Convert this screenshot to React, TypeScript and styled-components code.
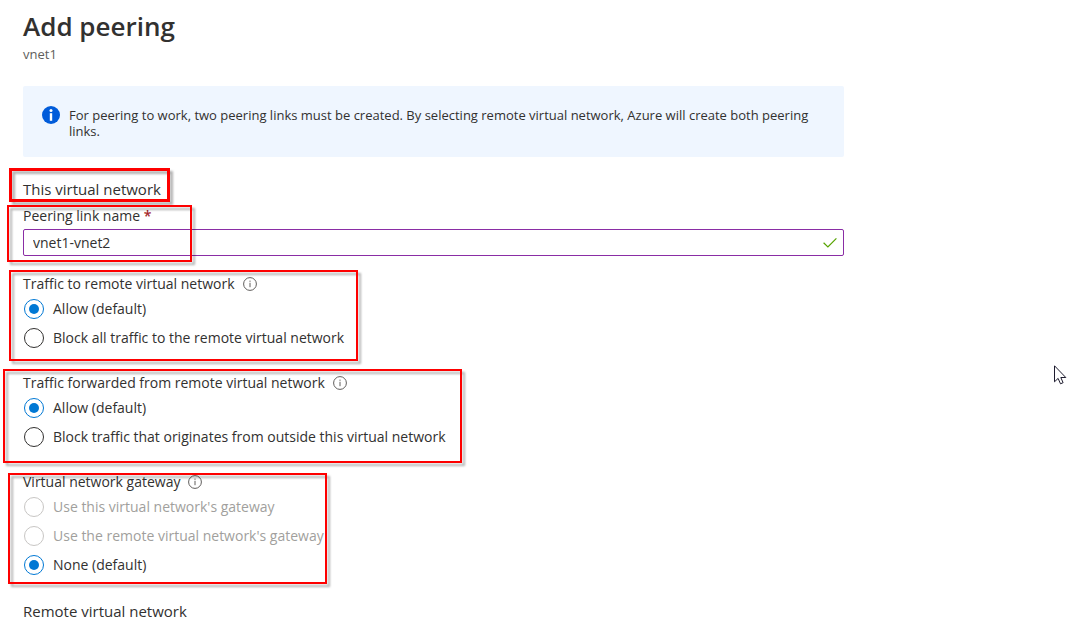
import { useState } from "react";
import styled, { createGlobalStyle } from "styled-components";

const GlobalStyle = createGlobalStyle`
  *, *::before, *::after { box-sizing: border-box; }
  body {
    margin: 0;
    background: #fff;
    color: #323130;
    font-family: "Segoe UI", "Open Sans", "Noto Sans", sans-serif;
    font-size: 14px;
    line-height: 20px;
  }
`;

const Page = styled.main`
  position: relative;
  min-height: 100vh;
  padding: 8px 23px;
  overflow: hidden;
`;

const Blade = styled.div`
  max-width: 821px;
`;

const Title = styled.h1`
  margin: 0;
  font-size: 26px;
  font-weight: 600;
  line-height: 36px;
`;

const Subtitle = styled.p`
  margin: 0;
  color: #605e5c;
  font-size: 13px;
`;

const Banner = styled.div`
  display: flex;
  gap: 9px;
  margin-top: 22px;
  padding: 20px 20px 16px 19px;
  min-height: 71px;
  border-radius: 2px;
  background: #eff6ff;
  font-size: 13px;
  line-height: 16px;

  svg { flex: none; }
  p { margin: 1px 0 0; }
`;

const Section = styled.section`
  position: relative;
  margin-top: 22px;
`;

const SectionTitle = styled.h2`
  margin: 0;
  font-size: 15px;
  font-weight: 400;
  line-height: 20px;
`;

const Field = styled.div`
  position: relative;
  margin-top: 7px;

  label { display: block; line-height: 20px; }
`;

const Required = styled.span`
  color: #a4262c;
  font-weight: 600;
`;

const InputBox = styled.div`
  display: flex;
  align-items: center;
  height: 27px;
  margin-top: 3px;
  padding-right: 6px;
  border: 1px solid #8a2da5;
  border-radius: 2px;
`;

const TextInput = styled.input`
  flex: 1;
  min-width: 0;
  padding: 0 9px;
  border: 0;
  outline: 0;
  background: transparent;
  color: inherit;
  font: inherit;
`;

const GroupFrame = styled.div`
  position: relative;
`;

const Group = styled.fieldset`
  min-width: 0;
  margin: 0;
  padding: 0;
  border: 0;
`;

const Groups = styled.div`
  display: flex;
  flex-direction: column;
  gap: 21px;
  margin-top: 18px;
`;

const Legend = styled.legend`
  display: flex;
  align-items: center;
  gap: 8px;
  height: 20px;
  padding: 0;
`;

const InfoButton = styled.button`
  display: flex;
  padding: 0;
  border: 0;
  background: none;
  color: #605e5c;
`;

const Option = styled.label`
  display: flex;
  align-items: center;
  gap: 9px;
  height: 29px;
  padding-left: 1px;

  &:has(input:disabled) { color: #a19f9d; }
`;

const Radio = styled.input`
  display: grid;
  place-content: center;
  width: 20px;
  height: 20px;
  margin: 0;
  border: 1px solid #323130;
  border-radius: 50%;
  background: #fff;
  appearance: none;

  &:checked { border-color: #0078d4; }
  &:checked::before {
    content: "";
    width: 10px;
    height: 10px;
    border-radius: 50%;
    background: #0078d4;
  }
  &:disabled { border-color: #c8c6c4; }
`;

interface MarkProps {
  $x: number;
  $y: number;
  $w: number;
  $h: number;
  $stroke?: number;
}

const Mark = styled.span<MarkProps>`
  position: absolute;
  left: ${(p) => p.$x}px;
  top: ${(p) => p.$y}px;
  width: ${(p) => p.$w}px;
  height: ${(p) => p.$h}px;
  border: ${(p) => p.$stroke ?? 2}px solid #fe0000;
  filter: drop-shadow(3px 3px 1px rgba(0, 0, 0, 0.3));
  pointer-events: none;
`;

const Pointer = styled.svg`
  position: absolute;
  left: 1054px;
  top: 365px;
`;

const InfoOutline = () => (
  <svg width="14" height="14" viewBox="0 0 14 14" fill="none" stroke="currentColor" aria-hidden="true">
    <circle cx="7" cy="7" r="6.4" />
    <path d="M7 5.8v4.4M7 3.6v1.2" />
  </svg>
);

interface Choice {
  label: string;
  disabled?: boolean;
}

interface RadioGroupProps {
  name: string;
  title: string;
  choices: Choice[];
  initial: number;
  mark: MarkProps;
}

const RadioGroup = ({ name, title, choices, initial, mark }: RadioGroupProps) => {
  const [selected, setSelected] = useState(initial);
  return (
    <GroupFrame>
      <Group>
        <Legend>
          {title}
          <InfoButton type="button" aria-label={`About ${title}`}>
            <InfoOutline />
          </InfoButton>
        </Legend>
        {choices.map((choice, i) => (
          <Option key={choice.label}>
            <Radio
              type="radio"
              name={name}
              checked={selected === i}
              disabled={choice.disabled}
              onChange={() => setSelected(i)}
            />
            {choice.label}
          </Option>
        ))}
      </Group>
      <Mark {...mark} />
    </GroupFrame>
  );
};

export default function App() {
  const [linkName, setLinkName] = useState("vnet1-vnet2");
  return (
    <Page>
      <GlobalStyle />
      <Blade>
        <Title>Add peering</Title>
        <Subtitle>vnet1</Subtitle>
        <Banner role="note">
          <svg width="18" height="18" viewBox="0 0 18 18" aria-hidden="true">
            <circle cx="9" cy="9" r="9" fill="#015cda" />
            <circle cx="9" cy="4.4" r="1.5" fill="#fff" />
            <path d="M7.8 7.2h2.4v7.6H7.8z" fill="#fff" />
          </svg>
          <p>
            For peering to work, two peering links must be created. By selecting remote virtual
            network, Azure will create both peering links.
          </p>
        </Banner>

        <Section>
          <SectionTitle>This virtual network</SectionTitle>
          <Mark $x={-14} $y={-11} $w={161} $h={34} $stroke={3} />
        </Section>
        <Field>
          <label htmlFor="link-name">
            Peering link name <Required>*</Required>
          </label>
          <InputBox>
            <TextInput id="link-name" value={linkName} onChange={(e) => setLinkName(e.target.value)} />
            <svg width="14" height="12" viewBox="0 0 14 12" fill="none" stroke="#57a300" strokeWidth="1.2" aria-hidden="true">
              <path d="M.6 5.8 4.9 10 13.4 1.4" />
            </svg>
          </InputBox>
          <Mark $x={-16} $y={-1} $w={185} $h={57} />
        </Field>

        <Groups>
          <RadioGroup
            name="to-remote"
            title="Traffic to remote virtual network"
            initial={0}
            choices={[
              { label: "Allow (default)" },
              { label: "Block all traffic to the remote virtual network" },
            ]}
            mark={{ $x: -14, $y: -4, $w: 349, $h: 91 }}
          />
          <RadioGroup
            name="forwarded"
            title="Traffic forwarded from remote virtual network"
            initial={0}
            choices={[
              { label: "Allow (default)" },
              { label: "Block traffic that originates from outside this virtual network" },
            ]}
            mark={{ $x: -20, $y: -4, $w: 459, $h: 94 }}
          />
          <RadioGroup
            name="gateway"
            title="Virtual network gateway"
            initial={2}
            choices={[
              { label: "Use this virtual network's gateway", disabled: true },
              { label: "Use the remote virtual network's gateway", disabled: true },
              { label: "None (default)" },
            ]}
            mark={{ $x: -15, $y: 1, $w: 319, $h: 111 }}
          />
        </Groups>

        <Section>
          <SectionTitle>Remote virtual network</SectionTitle>
        </Section>
      </Blade>
      <Pointer width="13" height="20" viewBox="0 0 13 20" aria-hidden="true">
        <path
          d="M.5.8v16l3.6-3.4 2.4 5.4 2.6-1.1-2.3-5.2h5z"
          fill="#fff"
          stroke="#1d1b2e"
        />
      </Pointer>
    </Page>
  );
}
